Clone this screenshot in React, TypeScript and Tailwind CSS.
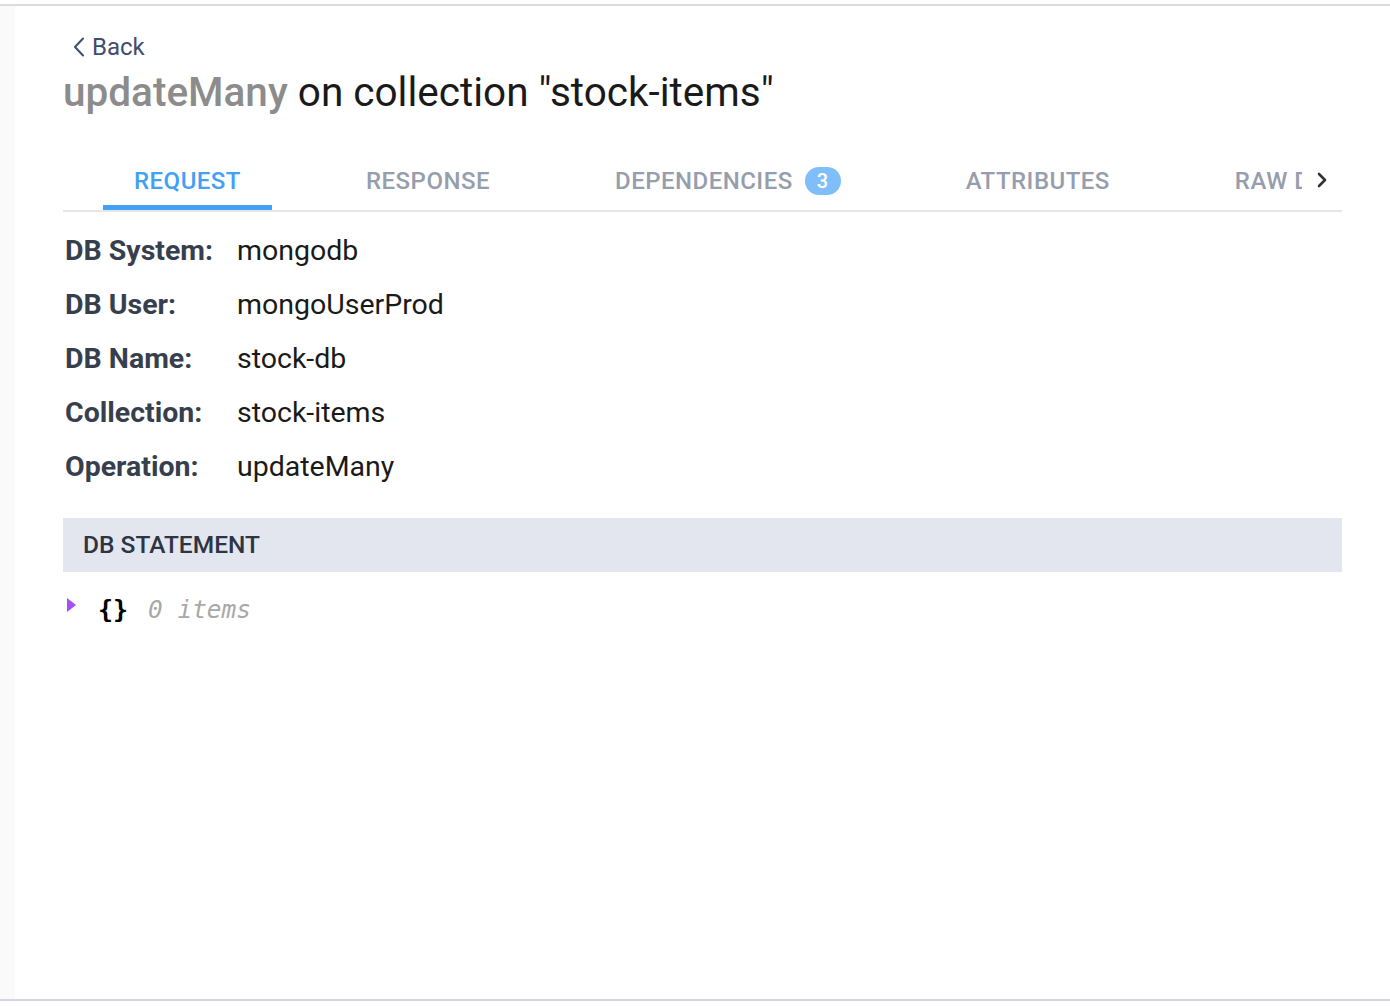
import { ChevronRight } from 'lucide-react'

const fields: [string, string][] = [
  ['DB System:', 'mongodb'],
  ['DB User:', 'mongoUserProd'],
  ['DB Name:', 'stock-db'],
  ['Collection:', 'stock-items'],
  ['Operation:', 'updateMany'],
]

function Tabs() {
  return (
    <div className="flex items-end border-b-2 border-[#e6e6e6] h-[96px] pl-[40px]">
      <div className="flex flex-1 min-w-0 overflow-hidden gap-[63px] pt-[8px] text-[24px] font-medium tracking-[0.02em] leading-[30px]">
        <div className="shrink-0 px-[31px] pb-[9px] border-b-[5px] border-[#42a0f5] text-[#42a0f5]">REQUEST</div>
        <div className="shrink-0 px-[31px] pb-[14px] text-[#969eae]">RESPONSE</div>
        <div className="shrink-0 px-[31px] pb-[14px] text-[#969eae] flex items-center gap-[12px] whitespace-nowrap">
          <span>DEPENDENCIES</span>
          <span className="bg-[#7fbef9] text-white text-[20px] leading-none rounded-full w-[36px] h-[28px] flex items-center justify-center">3</span>
        </div>
        <div className="shrink-0 px-[31px] pb-[14px] text-[#969eae]">ATTRIBUTES</div>
        <div className="shrink-0 px-[31px] pb-[14px] text-[#969eae] whitespace-nowrap">RAW DATA</div>
      </div>
      <div className="shrink-0 w-[40px] h-[40px] flex items-center justify-center mb-[10px] text-[#333]">
        <ChevronRight size={24} strokeWidth={2.6} />
      </div>
    </div>
  )
}

export default function App() {
  return (
    <div className="h-[1006px] bg-white flex flex-col" style={{ fontFamily: 'Roboto, "Liberation Sans", sans-serif' }}>
      <div className="h-[4px] shrink-0" />
      <div className="h-[2px] shrink-0 bg-[#dadbe3]" />
      <div className="flex flex-1 min-h-0">
        <div className="w-[15px] shrink-0 bg-[#fafafa]" />
        <div className="flex-1 min-w-0 px-[48px]">
          <div className="flex items-center gap-[7px] mt-[24px] text-[#3f4d6e] text-[24px] leading-[34px]">
            <svg width="12" height="20" viewBox="0 0 12 20" className="ml-[10px]">
              <path d="M10 1.5 L2 10 L10 18.5" fill="none" stroke="#3f4d6e" strokeWidth="2" strokeLinecap="round" strokeLinejoin="round" />
            </svg>
            <span>Back</span>
          </div>
          <h1 className="text-[40.5px] leading-[48px] text-[#1a1a1a] mt-[4px]">
            <span className="text-[#8c8c8c] font-medium">updateMany</span> on collection "stock-items"
          </h1>
          <Tabs />
          <div className="pt-[12px] pl-[2px]">
            {fields.map(([k, v]) => (
              <div key={k} className="flex h-[54px] items-center text-[28.5px] leading-[36px]">
                <div className="w-[172px] font-bold text-[#373f4f]">{k}</div>
                <div className="text-[#1a1a1a]">{v}</div>
              </div>
            ))}
          </div>
          <div className="mt-[24px] h-[54px] bg-[#e3e6ee] flex items-center px-[20px] text-[24.5px] font-medium text-[#2d3444]">DB STATEMENT</div>
          <div className="flex items-center mt-[26px] pl-[4px] h-[24px]">
            <svg width="9" height="14" viewBox="0 0 9 14" className="mt-[-10px]"><path d="M0 0 L9 7 L0 14 Z" fill="#a64dff" /></svg>
            <span className="ml-[22px] font-bold text-[25px] text-black" style={{ fontFamily: '"DejaVu Sans Mono", monospace' }}>{'{}'}</span>
            <span className="ml-[20px] italic text-[24.4px] text-[#a8a8a8]" style={{ fontFamily: '"DejaVu Sans Mono", monospace' }}>0 items</span>
          </div>
        </div>
      </div>
      <div className="h-[2px] shrink-0 bg-[#d4d8de]" />
      <div className="h-[5px] shrink-0" />
    </div>
  )
}
